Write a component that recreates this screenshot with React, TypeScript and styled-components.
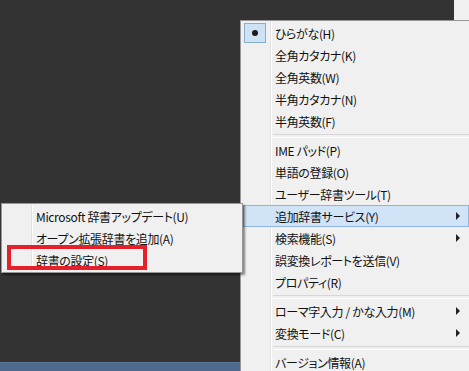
import React from "react";
import styled, { createGlobalStyle } from "styled-components";

const GlobalStyle = createGlobalStyle`
  html, body {
    margin: 0;
    padding: 0;
    background: #333333;
  }
  * { box-sizing: border-box; }
`;

type Item =
  | { sep: true }
  | { label: string; checked?: boolean; sub?: boolean; active?: boolean };

const mainItems: Item[] = [
  { label: "ひらがな(H)", checked: true },
  { label: "全角カタカナ(K)" },
  { label: "全角英数(W)" },
  { label: "半角カタカナ(N)" },
  { label: "半角英数(F)" },
  { sep: true },
  { label: "IME パッド(P)" },
  { label: "単語の登録(O)" },
  { label: "ユーザー辞書ツール(T)" },
  { label: "追加辞書サービス(Y)", sub: true, active: true },
  { label: "検索機能(S)", sub: true },
  { label: "誤変換レポートを送信(V)" },
  { label: "プロパティ(R)" },
  { sep: true },
  { label: "ローマ字入力 / かな入力(M)", sub: true },
  { label: "変換モード(C)", sub: true },
  { sep: true },
  { label: "バージョン情報(A)" },
];

const subItems: Item[] = [
  { label: "Microsoft 辞書アップデート(U)" },
  { label: "オープン拡張辞書を追加(A)" },
  { label: "辞書の設定(S)" },
];

const App: React.FC = () => {
  const renderItems = (items: Item[]) =>
    items.map((it, i) =>
      "sep" in it ? (
        <Separator key={i} />
      ) : (
        <Row key={i} active={it.active}>
          <CheckCell>
            {it.checked ? (
              <CheckBox>
                <Dot />
              </CheckBox>
            ) : null}
          </CheckCell>
          <Label>{it.label}</Label>
          {it.sub ? <Arrow /> : null}
        </Row>
      )
    );

  return (
    <Desktop>
      <GlobalStyle />
      <Workspace>
        <WindowCorner />
        <MainMenu>
          <Gutter />
          {renderItems(mainItems)}
        </MainMenu>
        <SubMenu>
          <Gutter />
          {renderItems(subItems)}
        </SubMenu>
        <Highlight />
      </Workspace>
      <Taskbar />
    </Desktop>
  );
};

const Desktop = styled.div`
  width: 469px;
  height: 371px;
  overflow: hidden;
  display: flex;
  flex-direction: column;
  background: #333333;
  font-family: "Noto Sans CJK JP", "Noto Sans", sans-serif;
  font-size: 12px;
  font-feature-settings: "palt";
  letter-spacing: -0.35px;
  color: #111;
`;

const Workspace = styled.div`
  position: relative;
  flex: 1;
`;

const Taskbar = styled.div`
  height: 9px;
  width: 240px;
  background: #4d6a8e;
  border-top: 1px solid #5c789b;
`;

const WindowCorner = styled.div`
  position: absolute;
  left: 454px;
  top: 0;
  width: 20px;
  height: 20px;
  background: #f0f0f0;
`;

const MenuBox = styled.div`
  position: absolute;
  background: #f0f0f0;
  border: 1px solid #979797;
  padding: 1px 2px;
  display: flex;
  flex-direction: column;
`;

const MainMenu = styled(MenuBox)`
  left: 240px;
  top: 20px;
  width: 232px;
  height: 360px;
`;

const SubMenu = styled(MenuBox)`
  left: 1px;
  top: 203px;
  width: 242px;
  box-shadow: 2px 2px 2px rgba(0, 0, 0, 0.45);
  z-index: 2;
`;

const Gutter = styled.div`
  position: absolute;
  left: 29px;
  top: 1px;
  bottom: 1px;
  width: 2px;
  border-left: 1px solid #e2e2e2;
  border-right: 1px solid #ffffff;
`;

const Row = styled.div<{ active?: boolean }>`
  position: relative;
  height: 22px;
  display: flex;
  align-items: center;
  border: 1px solid ${(p) => (p.active ? "#90b4da" : "transparent")};
  background: ${(p) => (p.active ? "#d1e3f6" : "transparent")};
  white-space: nowrap;
`;

const CheckCell = styled.div`
  width: 31px;
  height: 100%;
  flex: none;
  display: flex;
  align-items: center;
`;

const CheckBox = styled.div`
  width: 22px;
  height: 20px;
  background: #cde3f5;
  border: 1px solid #89aecb;
  display: flex;
  align-items: center;
  justify-content: center;
`;

const Dot = styled.div`
  width: 6px;
  height: 6px;
  border-radius: 50%;
  background: #1a1a1a;
`;

const Label = styled.span`
  flex: 1;
  line-height: 20px;
  padding-top: 1px;
`;

const Arrow = styled.span`
  width: 0;
  height: 0;
  margin-right: 8px;
  border-top: 4px solid transparent;
  border-bottom: 4px solid transparent;
  border-left: 4px solid #222;
`;

const Separator = styled.div`
  height: 7px;
  margin-left: 30px;
  display: flex;
  align-items: center;
  &::after {
    content: "";
    flex: 1;
    height: 2px;
    border-top: 1px solid #d7d7d7;
    border-bottom: 1px solid #ffffff;
  }
`;

const Highlight = styled.div`
  position: absolute;
  left: 7px;
  top: 245px;
  width: 140px;
  height: 25px;
  border: 4px solid #e5202b;
  z-index: 3;
`;

export default App;
